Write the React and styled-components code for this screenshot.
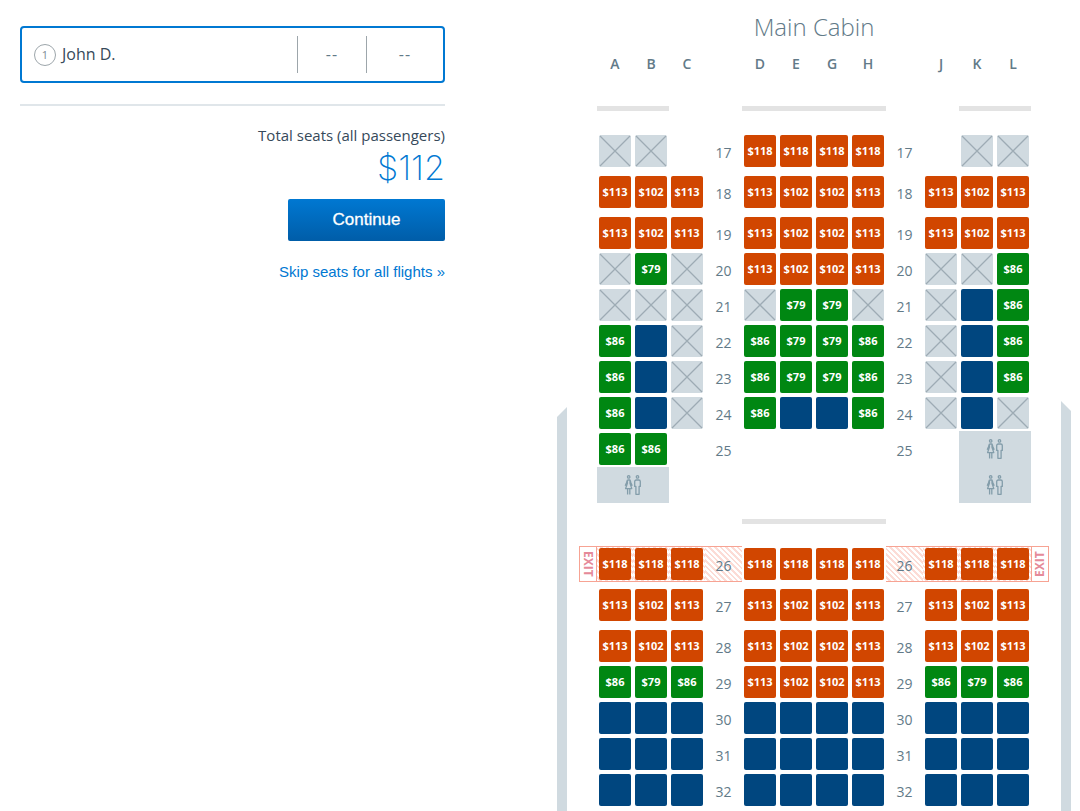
import React, { useState } from "react";
import styled, { createGlobalStyle, css } from "styled-components";

const GlobalStyle = createGlobalStyle`
  * {
    box-sizing: border-box;
  }

  body {
    margin: 0;
    background-color: #fff;
    color: #36495a;
    font-family: "Open Sans", "Noto Sans", sans-serif;
    font-size: 16px;
  }
`;

const Page = styled.main`
  display: flex;
  min-height: 100vh;
`;

const Sidebar = styled.section`
  flex: 1;
  display: flex;
  flex-direction: column;
  padding: 26px 112px 0 20px;
`;

const Passenger = styled.div`
  display: flex;
  align-items: center;
  height: 57px;
  padding-left: 12px;
  border: 2px solid #0078d2;
  border-radius: 4px;
`;

const PassengerNumber = styled.span`
  width: 22px;
  height: 22px;
  margin-right: 6px;
  border: 1px solid #9da6ab;
  border-radius: 50%;
  color: #7d8a93;
  font-size: 11px;
  line-height: 20px;
  text-align: center;
`;

const PassengerName = styled.span`
  flex: 1;
  padding-bottom: 2px;
  font-size: 16px;
`;

const PassengerCell = styled.span`
  width: ${(props) => (props.wide ? "77px" : "69px")};
  height: 37px;
  border-left: 1px solid #9da6ab;
  color: #627a88;
  line-height: 36px;
  letter-spacing: 1px;
  text-align: center;
`;

const Rule = styled.hr`
  width: 100%;
  height: 2px;
  margin: 21px 0 18px;
  border: none;
  background-color: #e0e6ea;
`;

const Summary = styled.div`
  display: flex;
  flex-direction: column;
  align-items: flex-end;
`;

const TotalLabel = styled.span`
  font-size: 15px;
  line-height: 22px;
`;

const TotalPrice = styled.span`
  color: #0078d2;
  font-family: Inter, "Open Sans", sans-serif;
  font-size: 34px;
  font-weight: 200;
  line-height: 44px;
`;

const ContinueButton = styled.button`
  width: 157px;
  height: 42px;
  margin: 9px 0;
  padding: 0;
  border: none;
  border-radius: 2px;
  background: linear-gradient(#0078d2, #005da8);
  color: #fff;
  font-family: "Liberation Sans", Arial, sans-serif;
  font-size: 17px;
  -webkit-text-stroke: 0.3px #fff;
  cursor: pointer;
`;

const SkipLink = styled.a`
  margin-top: 12px;
  color: #0078d2;
  font-family: "Liberation Sans", Arial, sans-serif;
  font-size: 15px;
  line-height: 20px;
  text-decoration: none;
`;

const Cabin = styled.section`
  display: flex;
  gap: 12px;
  padding-right: 9px;
`;

const Wall = styled.div`
  width: 10px;
  margin-top: ${(props) => (props.right ? "401px" : "407px")};
  background-color: #d0dae0;
  clip-path: ${(props) =>
    props.right
      ? "polygon(0 0, 100% 10px, 100% 100%, 0 100%)"
      : "polygon(0 10px, 100% 0, 100% 100%, 0 100%)"};
`;

const CabinTitle = styled.h1`
  margin: 11px 0;
  color: #627a88;
  font-size: 24px;
  font-weight: 300;
  line-height: 32px;
  text-align: center;
`;

const Row = styled.div`
  display: grid;
  grid-template-columns: 18px repeat(3, 36px) 37px repeat(4, 36px) 37px repeat(3, 36px) 18px;
  margin-bottom: ${(props) => (props.roomy ? "5px" : "0")};
`;

const LetterRow = styled(Row)`
  margin-bottom: 16px;
`;

const ColumnLetter = styled.span`
  grid-column: ${(props) => props.column};
  color: #627a88;
  font-size: 14px;
  font-weight: 600;
  line-height: 20px;
  text-align: center;
`;

const BarRow = styled(Row)`
  padding: 16px 0 22px;
`;

const Bar = styled.div`
  grid-column: ${(props) => props.span};
  height: 5px;
  background-color: #e3e3e3;
`;

const exitHatch = css`
  border-top: 1px solid #f7a393;
  border-bottom: 1px solid #f7a393;
  background-image: repeating-linear-gradient(
    45deg,
    #fff 0 2px,
    #fcdcd6 2px 4px
  );
`;

const Cell = styled.div`
  grid-column: ${(props) => props.column};
  display: flex;
  align-items: center;
  justify-content: center;
  height: 36px;
  ${(props) => props.exit && exitHatch}
`;

const RowNumber = styled(Cell)`
  padding-top: 3px;
  color: #627a88;
  font-size: 14px;
`;

const ExitLabel = styled.div`
  grid-column: ${(props) => (props.right ? 14 : 1)};
  height: 36px;
  border: 1px solid #f7a393;
  color: #e58a99;
  font-size: 12px;
  font-weight: 700;
  line-height: 16px;
  text-align: center;
  writing-mode: vertical-rl;
  transform: ${(props) => (props.right ? "rotate(180deg)" : "none")};
`;

const seatColors = {
  extra: "#d14600",
  preferred: "#008712",
  main: "#00467f",
  taken: "#d0dae0",
};

const SeatButton = styled.button`
  width: 32px;
  height: 32px;
  padding: 0;
  border: none;
  border-radius: 2px;
  background-color: ${(props) => seatColors[props.$kind]};
  color: #fff;
  font-family: inherit;
  font-size: 11px;
  font-weight: 700;
  line-height: 32px;
  text-align: center;
  cursor: ${(props) => (props.disabled ? "default" : "pointer")};

  svg {
    display: block;
  }
`;

const Lavatory = styled.div`
  grid-column: ${(props) => props.span};
  display: flex;
  align-items: center;
  justify-content: center;
  height: 36px;
  background-color: #d0dae0;
`;

const COLUMNS = { A: 2, B: 3, C: 4, D: 6, E: 7, G: 8, H: 9, J: 11, K: 12, L: 13 };

// "x" taken, "m" standard seat without a fee, "." no seat
const FRONT_ROWS = [
  { number: 17, seats: "x x . 118 118 118 118 . x x", roomy: true },
  { number: 18, seats: "113 102 113 113 102 102 113 113 102 113", roomy: true },
  { number: 19, seats: "113 102 113 113 102 102 113 113 102 113" },
  { number: 20, seats: "x 79 x 113 102 102 113 x x 86" },
  { number: 21, seats: "x x x x 79 79 x x m 86" },
  { number: 22, seats: "86 m x 86 79 79 86 x m 86" },
  { number: 23, seats: "86 m x 86 79 79 86 x m 86" },
  { number: 24, seats: "86 m x 86 m m 86 x m x" },
  { number: 25, seats: "86 86 . . . . . . . .", lavatories: ["12 / 14"] },
  { seats: ". . . . . . . . . .", lavatories: ["2 / 4", "12 / 14"] },
];

const REAR_ROWS = [
  { number: 26, seats: "118 118 118 118 118 118 118 118 118 118", roomy: true, exit: true },
  { number: 27, seats: "113 102 113 113 102 102 113 113 102 113", roomy: true },
  { number: 28, seats: "113 102 113 113 102 102 113 113 102 113" },
  { number: 29, seats: "86 79 86 113 102 102 113 86 79 86" },
  { number: 30, seats: "m m m m m m m m m m" },
  { number: 31, seats: "m m m m m m m m m m" },
  { number: 32, seats: "m m m m m m m m m m" },
];

const seatKind = (value) => {
  if (value === "x") return "taken";
  if (value === "m") return "main";
  return Number(value) > 100 ? "extra" : "preferred";
};

const CrossIcon = () => (
  <svg width="32" height="32" viewBox="0 0 32 32" aria-hidden="true">
    <path d="M1 1L31 31M31 1L1 31" stroke="#9dabb4" strokeWidth="1.3" />
  </svg>
);

const LavatoryIcon = () => (
  <svg
    width="18"
    height="20"
    viewBox="0 0 18 20"
    fill="none"
    stroke="#839daa"
    strokeWidth="1.3"
    strokeLinejoin="round"
    aria-hidden="true"
  >
    <circle cx="4.7" cy="1.9" r="1.2" />
    <path d="M3.4 5h2.6l1 3 1.2 2.8M3.4 5l-1 3-1.2 2.8M3.4 5v3.2L1.6 13.6h6.2L6 8.2V5M3.6 13.6v5.8M5.8 13.6v5.8" />
    <circle cx="13.5" cy="1.9" r="1.2" />
    <path d="M12.3 5h2.4c1 0 1.6.6 1.6 1.5v4.9h-1.2v7.9h-3.2v-7.9h-1.2V6.5c0-.9.6-1.5 1.6-1.5z" />
  </svg>
);

const Seat = ({ id, value, selected, onSelect }) => {
  const kind = seatKind(value);
  return (
    <SeatButton
      type="button"
      $kind={kind}
      disabled={kind === "taken"}
      aria-label={`Seat ${id}`}
      aria-pressed={selected}
      onClick={() => onSelect(id)}
    >
      {kind === "taken" && <CrossIcon />}
      {Number(value) > 0 && `$${value}`}
    </SeatButton>
  );
};

const SeatRow = ({ row, selected, onSelect }) => {
  const values = row.seats.split(" ");
  return (
    <Row roomy={row.roomy}>
      {row.exit && <ExitLabel>EXIT</ExitLabel>}
      {Object.keys(COLUMNS).map((letter, i) => {
        if (values[i] === ".") return null;
        const id = `${row.number}${letter}`;
        const column = COLUMNS[letter];
        return (
          <Cell
            key={letter}
            column={column}
            exit={row.exit && (column < 5 || column > 10)}
            style={{ gridRow: 1 }}
          >
            <Seat
              id={id}
              value={values[i]}
              selected={selected === id}
              onSelect={onSelect}
            />
          </Cell>
        );
      })}
      {row.number &&
        [5, 10].map((column) => (
          <RowNumber
            key={column}
            column={column}
            exit={row.exit}
            style={{ gridRow: 1 }}
          >
            {row.number}
          </RowNumber>
        ))}
      {row.lavatories?.map((span) => (
        <Lavatory key={span} span={span} style={{ gridRow: 1 }}>
          <LavatoryIcon />
        </Lavatory>
      ))}
      {row.exit && (
        <ExitLabel right style={{ gridRow: 1 }}>
          EXIT
        </ExitLabel>
      )}
    </Row>
  );
};

const App = () => {
  const [selected, setSelected] = useState(null);

  const renderRow = (row, i) => (
    <SeatRow key={i} row={row} selected={selected} onSelect={setSelected} />
  );

  return (
    <>
      <GlobalStyle />
      <Page>
        <Sidebar>
          <Passenger>
            <PassengerNumber>1</PassengerNumber>
            <PassengerName>John D.</PassengerName>
            <PassengerCell>--</PassengerCell>
            <PassengerCell wide>--</PassengerCell>
          </Passenger>
          <Rule />
          <Summary>
            <TotalLabel>Total seats (all passengers)</TotalLabel>
            <TotalPrice>$112</TotalPrice>
            <ContinueButton type="button">Continue</ContinueButton>
            <SkipLink href="#skip">Skip seats for all flights »</SkipLink>
          </Summary>
        </Sidebar>

        <Cabin>
          <Wall />
          <div>
            <CabinTitle>Main Cabin</CabinTitle>
            <LetterRow>
              {Object.keys(COLUMNS).map((letter) => (
                <ColumnLetter key={letter} column={COLUMNS[letter]}>
                  {letter}
                </ColumnLetter>
              ))}
            </LetterRow>
            <BarRow>
              <Bar span="2 / 4" />
              <Bar span="6 / 10" />
              <Bar span="12 / 14" />
            </BarRow>
            {FRONT_ROWS.map(renderRow)}
            <BarRow>
              <Bar span="6 / 10" />
            </BarRow>
            {REAR_ROWS.map(renderRow)}
          </div>
          <Wall right />
        </Cabin>
      </Page>
    </>
  );
};

export default App;
